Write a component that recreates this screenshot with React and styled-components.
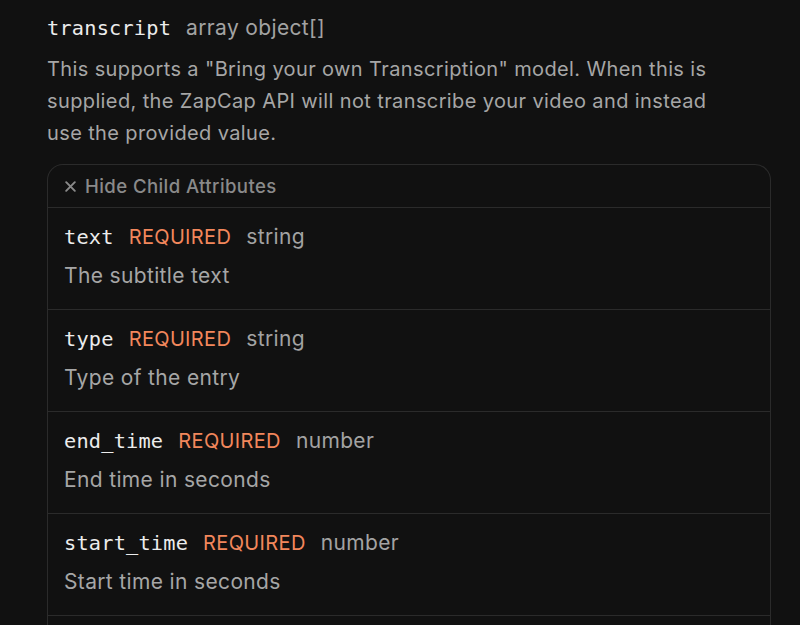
import styled, { createGlobalStyle } from "styled-components";

const GlobalStyle = createGlobalStyle`
  html, body {
    margin: 0;
    padding: 0;
    background: #111111;
  }
  body {
    font-family: Inter, "Noto Sans", sans-serif;
    -webkit-font-smoothing: antialiased;
  }
`;

const Page = styled.div`
  display: flex;
  flex-direction: column;
  padding: 12px 29px 0 47px;
  height: 625px;
  box-sizing: border-box;
  overflow: hidden;
  background: #111111;
`;

const Heading = styled.div`
  display: flex;
  align-items: baseline;
  gap: 15px;
  line-height: 32px;
`;

const FieldName = styled.span`
  font-family: "DejaVu Sans Mono", "Liberation Mono", monospace;
  font-size: 20.3px;
  color: #ececec;
  letter-spacing: 0.2px;
`;

const TypeLabel = styled.span`
  font-size: 21px;
  letter-spacing: 0.35px;
  color: #a3a3a3;
`;

const Required = styled.span`
  font-size: 20px;
  letter-spacing: 0.35px;
  color: #f2875c;
`;

const Description = styled.p`
  max-width: 672px;
  margin: 9px 0 15px;
  font-size: 20px;
  letter-spacing: 0.38px;
  line-height: 32px;
  color: #a6a6a6;
`;

const Box = styled.div`
  flex: 1;
  border: 1px solid #2b2b2b;
  border-bottom: none;
  border-radius: 16px 16px 0 0;
`;

const Toggle = styled.div`
  display: flex;
  align-items: center;
  gap: 8px;
  padding: 11px 16px;
  line-height: 20px;
  font-size: 18.6px;
  font-weight: 500;
  letter-spacing: 0.4px;
  color: #8a8a8a;
  border-bottom: 1px solid #2b2b2b;
`;

const Row = styled.div`
  display: flex;
  flex-direction: column;
  gap: 10px;
  padding: 15px 16px 18px;
  border-bottom: 1px solid #2b2b2b;
`;

const RowHead = styled.div`
  display: flex;
  align-items: baseline;
  gap: 15px;
  line-height: 28px;
`;

const RowText = styled.div`
  font-size: 21px;
  letter-spacing: 0.35px;
  line-height: 30px;
  color: #a6a6a6;
`;

const fields = [
  { name: "text", type: "string", text: "The subtitle text" },
  { name: "type", type: "string", text: "Type of the entry" },
  { name: "end_time", type: "number", text: "End time in seconds" },
  { name: "start_time", type: "number", text: "Start time in seconds" },
];

const CloseIcon = () => (
  <svg width="13" height="13" viewBox="0 0 12 12" fill="none">
    <path d="M2 2l8 8M10 2l-8 8" stroke="#8a8a8a" strokeWidth="1.8" strokeLinecap="round" />
  </svg>
);

export default function App() {
  return (
    <Page>
      <GlobalStyle />
      <Heading>
        <FieldName>transcript</FieldName>
        <TypeLabel>array object[]</TypeLabel>
      </Heading>
      <Description>
        This supports a "Bring your own Transcription" model. When this is
        supplied, the ZapCap API will not transcribe your video and instead
        use the provided value.
      </Description>
      <Box>
        <Toggle>
          <CloseIcon />
          Hide Child Attributes
        </Toggle>
        {fields.map((f) => (
          <Row key={f.name}>
            <RowHead>
              <FieldName>{f.name}</FieldName>
              <Required>REQUIRED</Required>
              <TypeLabel>{f.type}</TypeLabel>
            </RowHead>
            <RowText>{f.text}</RowText>
          </Row>
        ))}
      </Box>
    </Page>
  );
}
